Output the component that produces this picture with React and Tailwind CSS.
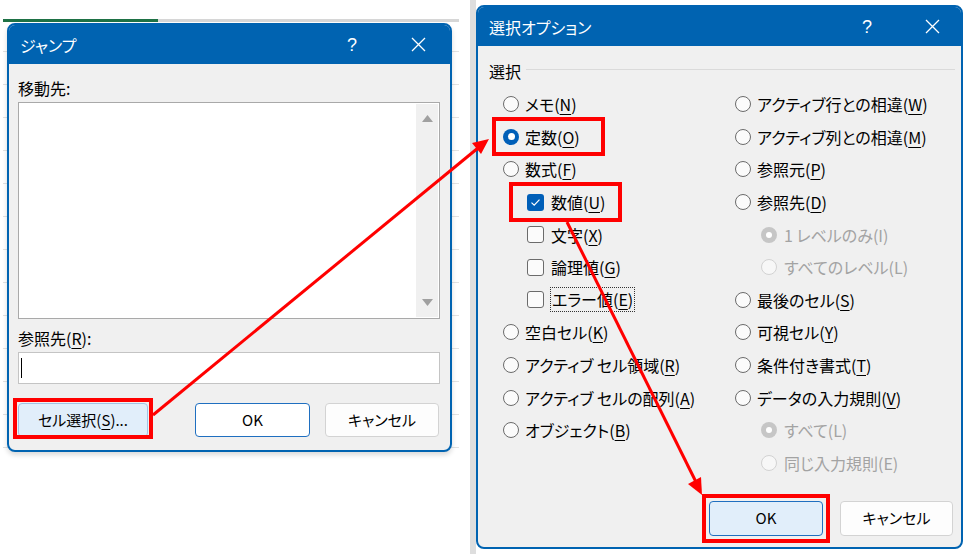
import React from 'react';

// label helper: "メモ(_N)" -> underline the char after "_"
const Label = ({ text, disabled }) => {
  const i = text.indexOf('_');
  if (i < 0 || disabled) {
    return <span className={disabled ? 'text-[#a3a3a3]' : ''}>{text.replace('_', '')}</span>;
  }
  return (
    <span>
      {text.slice(0, i)}
      <span className="underline underline-offset-[3px] decoration-1">{text[i + 1]}</span>
      {text.slice(i + 2)}
    </span>
  );
};

const Radio = ({ checked, disabled }) => {
  if (disabled) {
    return (
      <span
        className={
          'w-4 h-4 rounded-full flex items-center justify-center shrink-0 ' +
          (checked ? 'bg-[#c6c6c6]' : 'bg-[#f7f7f7] border border-[#d2d2d2]')
        }
      >
        {checked && <span className="w-[6px] h-[6px] rounded-full bg-white" />}
      </span>
    );
  }
  return (
    <span
      className={
        'w-4 h-4 rounded-full flex items-center justify-center shrink-0 ' +
        (checked ? 'bg-[#005fb8]' : 'bg-[#fbfbfb] border border-[#6b6b6b]')
      }
    >
      {checked && <span className="w-[7px] h-[7px] rounded-full bg-white" />}
    </span>
  );
};

const Check = ({ checked }) => (
  <span
    className={
      'w-[17px] h-[17px] rounded-[3px] flex items-center justify-center shrink-0 ' +
      (checked ? 'bg-[#005fb8]' : 'bg-[#fbfbfb] border border-[#6b6b6b]')
    }
  >
    {checked && (
      <svg width="11" height="9" viewBox="0 0 11 9">
        <path d="M1.5 4.6 L4.2 7.2 L9.5 1.6" fill="none" stroke="white" strokeWidth="1.2" />
      </svg>
    )}
  </span>
);

const Row = ({ children }) => <div className="h-[32.6px] flex items-center">{children}</div>;

const TitleBar = ({ title, gap, right }) => (
  <div className="h-[39px] bg-[#0063b1] flex items-center text-white shrink-0">
    <span className="pl-[11px] text-[16px] leading-none">{title}</span>
    <span className="ml-auto w-[20px] text-center text-[18px] leading-none font-['Liberation_Sans',sans-serif] font-light">?</span>
    <span className="w-[20px] flex justify-center" style={{ marginLeft: gap, marginRight: right }}>
      <svg width="15" height="15" viewBox="0 0 15 15">
        <path d="M1 1 L14 14 M14 1 L1 14" stroke="white" strokeWidth="1.3" />
      </svg>
    </span>
  </div>
);

const left = [
  { t: 'メモ(_N)' },
  { t: '定数(_O)', on: true },
  { t: '数式(_F)' },
  { t: '数値(_U)', box: true, on: true },
  { t: '文字(_X)', box: true },
  { t: '論理値(_G)', box: true },
  { t: 'エラー値(_E)', box: true, focus: true },
  { t: '空白セル(_K)' },
  { t: 'アクティブ セル領域(_R)' },
  { t: 'アクティブ セルの配列(_A)' },
  { t: 'オブジェクト(_B)' },
];

const right = [
  { t: 'アクティブ行との相違(_W)' },
  { t: 'アクティブ列との相違(_M)' },
  { t: '参照元(_P)' },
  { t: '参照先(_D)' },
  { t: '1 レベルのみ(I)', sub: true, on: true },
  { t: 'すべてのレベル(L)', sub: true },
  { t: '最後のセル(_S)' },
  { t: '可視セル(_Y)' },
  { t: '条件付き書式(_T)' },
  { t: 'データの入力規則(_V)' },
  { t: 'すべて(L)', sub: true, on: true },
  { t: '同じ入力規則(E)', sub: true },
];

const JumpDialog = () => (
  <div className="ml-[4px] mt-[1px] w-[445px] h-[429px] border-2 border-[#0063b1] rounded-[8px] bg-[#f0f0f0] flex flex-col overflow-hidden shadow-[0_3px_5px_rgba(0,0,0,0.15)]">
    <TitleBar title="ジャンプ" gap={46} right={22} />
    <div className="pl-[9px] pr-[10px] pt-[14px] flex flex-col">
      <div className="h-5 leading-5">移動先:</div>
      <div className="mt-[4px] h-[217px] bg-white border border-[#a9a9a9] flex justify-end p-px">
        <div className="w-[22px] bg-[#f0f0f0] flex flex-col items-center justify-between py-[11px]">
          <svg width="11" height="7" viewBox="0 0 11 7"><path d="M0 7 L5.5 0 L11 7 Z" fill="#a0a0a0" /></svg>
          <svg width="11" height="7" viewBox="0 0 11 7"><path d="M0 0 L5.5 7 L11 0 Z" fill="#a0a0a0" /></svg>
        </div>
      </div>
      <div className="mt-[9px] h-5 leading-5">
        参照先(<span className="underline underline-offset-[3px]">R</span>):
      </div>
      <div className="mt-[4px] h-[32px] bg-white border border-[#c4c4c4] flex items-center pl-[2px]">
        <span className="w-px h-[20px] bg-black" />
      </div>
      <div className="mt-[19px] flex text-[15px]">
        <button className="w-[130px] h-[34px] rounded-[4px] bg-[#e1eefa] border border-[#9fc3e6]">
          セル選択(<span className="underline underline-offset-[3px]">S</span>)...
        </button>
        <button className="ml-[47px] w-[115px] h-[34px] rounded-[4px] bg-white border border-[#1f6fc0]">OK</button>
        <button className="ml-[15px] w-[114px] h-[34px] rounded-[4px] bg-[#fdfdfd] border border-[#d3d3d3]">キャンセル</button>
      </div>
    </div>
  </div>
);

const OptionDialog = () => (
  <div className="mt-[5px] w-[487px] h-[544px] border-2 border-[#0063b1] rounded-[8px] bg-[#f0f0f0] flex flex-col overflow-hidden">
    <TitleBar title="選択オプション" gap={45} right={19} />
    <div className="flex-1 flex flex-col pl-[11px] pr-[6px] pt-[15px]">
      <div className="h-5 leading-5 flex items-center">
        <span>選択</span>
        <span className="ml-[5px] flex-1 h-px bg-[#dadada] -mt-[3px]" />
      </div>
      <div className="mt-[7px] pl-[14px] grid grid-cols-[232px_1fr]">
        <div>
          {left.map((r) => (
            <Row key={r.t}>
              {r.box ? (
                <span className="ml-[24px] flex items-center">
                  <Check checked={r.on} />
                  <span className={'ml-[6px] ' + (r.focus ? 'border border-dotted border-[#333] px-px h-[25px] leading-[23px]' : 'ml-[7px]')}>
                    <Label text={r.t} />
                  </span>
                </span>
              ) : (
                <>
                  <Radio checked={r.on} />
                  <span className="ml-[6px]"><Label text={r.t} /></span>
                </>
              )}
            </Row>
          ))}
        </div>
        <div>
          {right.map((r) => (
            <Row key={r.t}>
              {r.sub ? (
                <span className="ml-[26px] flex items-center">
                  <Radio checked={r.on} disabled />
                  <span className="ml-[7px]"><Label text={r.t} disabled /></span>
                </span>
              ) : (
                <>
                  <Radio checked={r.on} />
                  <span className="ml-[6px]"><Label text={r.t} /></span>
                </>
              )}
            </Row>
          ))}
        </div>
      </div>
      <div className="mt-auto pb-[11px] pr-[2px] flex justify-end text-[15px]">
        <button className="w-[114px] h-[35px] rounded-[4px] bg-[#e1eefa] border border-[#1f6fc0]">OK</button>
        <button className="ml-[17px] w-[113px] h-[35px] rounded-[4px] bg-[#fdfdfd] border border-[#d3d3d3]">キャンセル</button>
      </div>
    </div>
  </div>
);

export default function App() {
  return (
    <div className="relative w-[971px] h-[554px] bg-white overflow-hidden text-[16px] text-black font-['Noto_Sans_CJK_JP',sans-serif] [font-feature-settings:'palt']">
      <div className="flex items-start">
        <section className="ml-[3px] mt-[19px] w-[456px] h-[439px] bg-white bg-[repeating-linear-gradient(to_bottom,transparent_0px,transparent_32px,#e2e2e2_32px,#e2e2e2_33px)]">
          <div className="flex h-[3px]">
            <span className="w-[155px] bg-[#1e7145]" />
            <span className="flex-1 bg-[#d6d6d6]" />
          </div>
          <JumpDialog />
        </section>
        <section className="ml-[11px] w-[493px] h-[554px] flex">
          <span className="w-[6px] h-full bg-[#dedede] shrink-0" />
          <OptionDialog />
        </section>
      </div>

      <svg className="absolute inset-0 pointer-events-none" width="971" height="554">
        <g fill="none" stroke="#ff0000" strokeWidth="4">
          <rect x="15" y="400" width="136" height="37" />
          <rect x="494" y="119" width="109" height="35" />
          <rect x="511" y="184" width="109" height="36" />
          <rect x="704" y="496" width="124" height="45" />
        </g>
        <g stroke="#ff0000" strokeWidth="3" fill="#ff0000">
          <line x1="153" y1="415" x2="478" y2="148" />
          <polygon points="489,139 481,154 472,143" strokeWidth="0" />
          <line x1="567" y1="222" x2="696" y2="482" />
          <polygon points="702,495 688,484 701,477" strokeWidth="0" />
        </g>
      </svg>
    </div>
  );
}
